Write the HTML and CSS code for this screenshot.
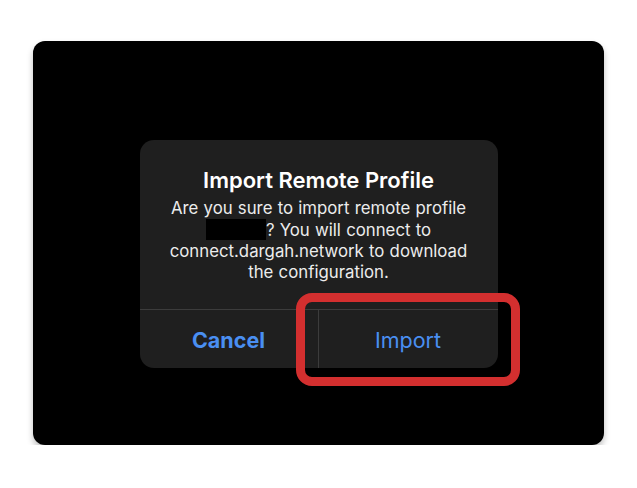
FILE: index.html
```html
<!DOCTYPE html>
<html>
<head>
<meta charset="utf-8">
<link rel="stylesheet" href="styles.css">
</head>
<body>
<div class="panel">
  <div class="dialog">
    <div class="content">
      <div class="title">Import Remote Profile</div>
      <div class="message">Are you sure to import remote profile <span class="redact"></span>? You will connect to connect.dargah.network to download the configuration.</div>
    </div>
    <div class="actions">
      <div class="btn cancel">Cancel</div>
      <div class="btn import">Import</div>
    </div>
    <div class="highlight"></div>
  </div>
</div>
</body>
</html>
```
FILE: styles.css
```css
html, body {
  margin: 0;
  padding: 0;
  background: #ffffff;
}
body {
  font-family: Inter, "Noto Sans", sans-serif;
}
.panel {
  margin: 41px 0 0 33px;
  width: 571px;
  height: 404px;
  background: #000000;
  border-radius: 12px;
  box-shadow: 0 4px 6px rgba(0, 0, 0, 0.25);
  padding-top: 99px;
  box-sizing: border-box;
  display: flex;
  flex-direction: column;
  align-items: center;
}
.dialog {
  position: relative;
  width: 358px;
  height: 228px;
  background: #1f1f1f;
  border-radius: 14px;
  display: flex;
  flex-direction: column;
}
.content {
  height: 170px;
  box-sizing: border-box;
  padding: 27px 24px 0;
  text-align: center;
  border-bottom: 1px solid #3c3c3c;
}
.title {
  color: #ffffff;
  font-size: 22px;
  font-weight: 600;
  line-height: 27px;
  margin-bottom: 4px;
}
.message {
  color: #ececec;
  font-size: 16.8px;
  line-height: 21px;
  word-spacing: 0.5px;
}
.redact {
  display: inline-block;
  width: 60px;
  height: 21px;
  background: #000000;
  vertical-align: -4px;
}
.actions {
  flex: 1;
  display: flex;
}
.btn {
  flex: 1;
  display: flex;
  align-items: center;
  justify-content: center;
  color: #4a8ff2;
  font-size: 21.5px;
  padding-top: 1px;
}
.cancel {
  font-weight: 700;
  flex: 0 0 178px;
}
.import {
  border-left: 1px solid #3c3c3c;
}
.highlight {
  position: absolute;
  left: 156px;
  top: 153px;
  width: 224px;
  height: 93px;
  box-sizing: border-box;
  border: 9px solid #d32f2f;
  border-radius: 16px;
}
```
